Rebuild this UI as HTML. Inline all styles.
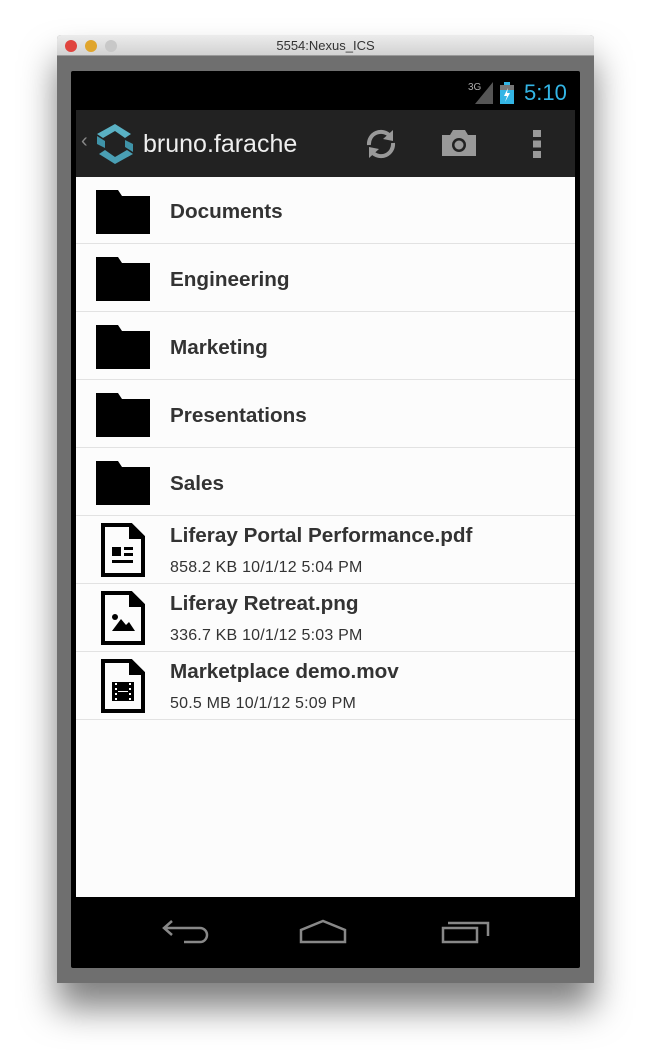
<!DOCTYPE html>
<html><head><style>
*{margin:0;padding:0;box-sizing:border-box}
body{width:651px;height:1062px;background:#fff;position:relative;overflow:hidden;font-family:"Liberation Sans",sans-serif}
.win{position:absolute;left:57px;top:35px;width:537px;height:948px;background:#6f6f6f;box-shadow:0 25px 35px rgba(0,0,0,.5);border-radius:4px 4px 0 0}
.tb{position:absolute;left:0;top:0;width:537px;height:21px;background:linear-gradient(#ececec,#d2d2d2);border-radius:4px 4px 0 0;border-bottom:1px solid #999;text-align:center;font-size:13px;line-height:21px;color:#333}
.dot{position:absolute;top:5px;width:12px;height:12px;border-radius:50%}
.scr{position:absolute;left:71px;top:71px;width:509px;height:897px;background:#000;border-radius:2px}
.ab{position:absolute;left:76px;top:110px;width:499px;height:67px;background:#222}
.list{position:absolute;left:76px;top:177px;width:499px;height:720px;background:#fcfcfc}
.row{position:absolute;left:0;width:499px;height:68px;border-bottom:1px solid #e2e2e2}
.t{position:absolute;left:94px;font-weight:bold;font-size:20.7px;color:#333}
.s{position:absolute;left:94px;top:43px;font-size:16px;color:#333;letter-spacing:.2px}
.f{position:absolute;left:20px;top:13px}
</style></head><body>
<div class="win">
<div class="tb">5554:Nexus_ICS
<div class="dot" style="left:8px;background:#e0443e"></div>
<div class="dot" style="left:28px;background:#e0a52c"></div>
<div class="dot" style="left:48px;background:#c8c8c8"></div></div>
</div>
<div class="scr"></div>
<div style="position:absolute;left:468px;top:82px;font-size:10px;color:#aaa">3G</div>
<svg style="position:absolute;left:475px;top:82px" width="18" height="22"><polygon points="18,0 18,22 0,22" fill="#555"/></svg>
<svg style="position:absolute;left:500px;top:82px" width="14" height="22"><rect x="0" y="3" width="14" height="19" fill="#33b5e5"/><rect x="4" y="0" width="6" height="3" fill="#33b5e5"/><rect x="0" y="3" width="14" height="5" fill="#777"/><polygon points="8,6 4,14 7,14 5,20 10,11 7,11" fill="#fff"/></svg>
<div style="position:absolute;left:524px;top:80px;font-size:22px;color:#33b5e5">5:10</div>
<div class="ab"></div>
<div style="position:absolute;left:81px;top:130px;font-size:20px;color:#888">‹</div>
<svg style="position:absolute;left:95px;top:122px" width="40" height="44" viewBox="0 0 40 44"><path d="M20 2 L36 12 L30 16 L20 9 L8 16 L2 12 Z" fill="#5ab1c4"/><path d="M20 42 L4 32 L10 28 L20 35 L32 28 L38 32 Z" fill="#4a9fb4"/><path d="M2 14 L10 19 L10 26 L2 22Z" fill="#3f93a8"/><path d="M38 30 L30 25 L30 18 L38 22Z" fill="#3f93a8"/></svg>
<div style="position:absolute;left:143px;top:130px;font-size:25px;color:#eee">bruno.farache</div>
<svg style="position:absolute;left:364px;top:127px" width="34" height="34" viewBox="0 0 34 34" fill="none" stroke="#999" stroke-width="4"><path d="M5 18 A12 12 0 0 1 26 9"/><path d="M29 16 A12 12 0 0 1 8 25"/><polygon points="29,3 29,14 19,12" fill="#999" stroke="none"/><polygon points="5,31 5,20 15,22" fill="#999" stroke="none"/></svg>
<svg style="position:absolute;left:442px;top:130px" width="34" height="26"><path d="M0 5 H8 L11 0 H23 L26 5 H34 V26 H0Z" fill="#999"/><circle cx="17" cy="15" r="7" fill="#222"/><circle cx="17" cy="15" r="4.5" fill="#999"/></svg>
<div style="position:absolute;left:533px;top:130px;width:8px;height:28px;background:linear-gradient(#999 0 7px,transparent 7px 10.5px,#999 10.5px 17.5px,transparent 17.5px 21px,#999 21px)"></div>
<div class="list">
<div class="row" style="top:0;height:67px"><svg class="f" width="54" height="44"><path d="M0 0 H22 L26 6 H54 V44 H0Z" fill="#000"/></svg><div class="t" style="top:23px">Documents</div></div>
<div class="row" style="top:67px"><svg class="f" width="54" height="44"><path d="M0 0 H22 L26 6 H54 V44 H0Z" fill="#000"/></svg><div class="t" style="top:24px">Engineering</div></div>
<div class="row" style="top:135px"><svg class="f" width="54" height="44"><path d="M0 0 H22 L26 6 H54 V44 H0Z" fill="#000"/></svg><div class="t" style="top:24px">Marketing</div></div>
<div class="row" style="top:203px"><svg class="f" width="54" height="44"><path d="M0 0 H22 L26 6 H54 V44 H0Z" fill="#000"/></svg><div class="t" style="top:24px">Presentations</div></div>
<div class="row" style="top:271px"><svg class="f" width="54" height="44"><path d="M0 0 H22 L26 6 H54 V44 H0Z" fill="#000"/></svg><div class="t" style="top:24px">Sales</div></div>
<div class="row" style="top:339px"><svg style="position:absolute;left:25px;top:7px" width="44" height="54"><path d="M2 2 H30 L42 14 V52 H2Z" fill="none" stroke="#000" stroke-width="4"/><path d="M28 2 V16 H42Z" fill="#000"/><rect x="11" y="24" width="9" height="9"/><rect x="23" y="24" width="9" height="3"/><rect x="23" y="30" width="9" height="3"/><rect x="11" y="37" width="21" height="3"/></svg><div class="t" style="top:8px">Liferay Portal Performance.pdf</div><div class="s">858.2 KB 10/1/12 5:04 PM</div></div>
<div class="row" style="top:407px"><svg style="position:absolute;left:25px;top:7px" width="44" height="54"><path d="M2 2 H30 L42 14 V52 H2Z" fill="none" stroke="#000" stroke-width="4"/><path d="M28 2 V16 H42Z" fill="#000"/><circle cx="14" cy="26" r="3"/><path d="M11 40 L20 28 L25 34 L28 31 L34 40Z"/></svg><div class="t" style="top:8px">Liferay Retreat.png</div><div class="s">336.7 KB 10/1/12 5:03 PM</div></div>
<div class="row" style="top:475px"><svg style="position:absolute;left:25px;top:7px" width="44" height="54"><path d="M2 2 H30 L42 14 V52 H2Z" fill="none" stroke="#000" stroke-width="4"/><path d="M28 2 V16 H42Z" fill="#000"/><rect x="11" y="23" width="22" height="19"/><rect x="14" y="24" width="2" height="2" fill="#fff"/><rect x="14" y="29" width="2" height="2" fill="#fff"/><rect x="14" y="34" width="2" height="2" fill="#fff"/><rect x="14" y="39" width="2" height="2" fill="#fff"/><rect x="28" y="24" width="2" height="2" fill="#fff"/><rect x="28" y="29" width="2" height="2" fill="#fff"/><rect x="28" y="34" width="2" height="2" fill="#fff"/><rect x="28" y="39" width="2" height="2" fill="#fff"/><rect x="17" y="32" width="10" height="1" fill="#fff"/></svg><div class="t" style="top:8px">Marketplace demo.mov</div><div class="s">50.5 MB 10/1/12 5:09 PM</div></div>
</div>
<svg style="position:absolute;left:160px;top:918px" width="340" height="30" fill="none" stroke="#888" stroke-width="2.5"><path d="M12 3 L4 10 L12 17 M4 10 H40 A6 6 0 0 1 40 24 H24"/><path d="M141 24 V12 L163 3 L185 12 V24Z"/><rect x="283" y="10" width="34" height="14"/><path d="M288 5 H328 V18"/></svg>
</body></html>
